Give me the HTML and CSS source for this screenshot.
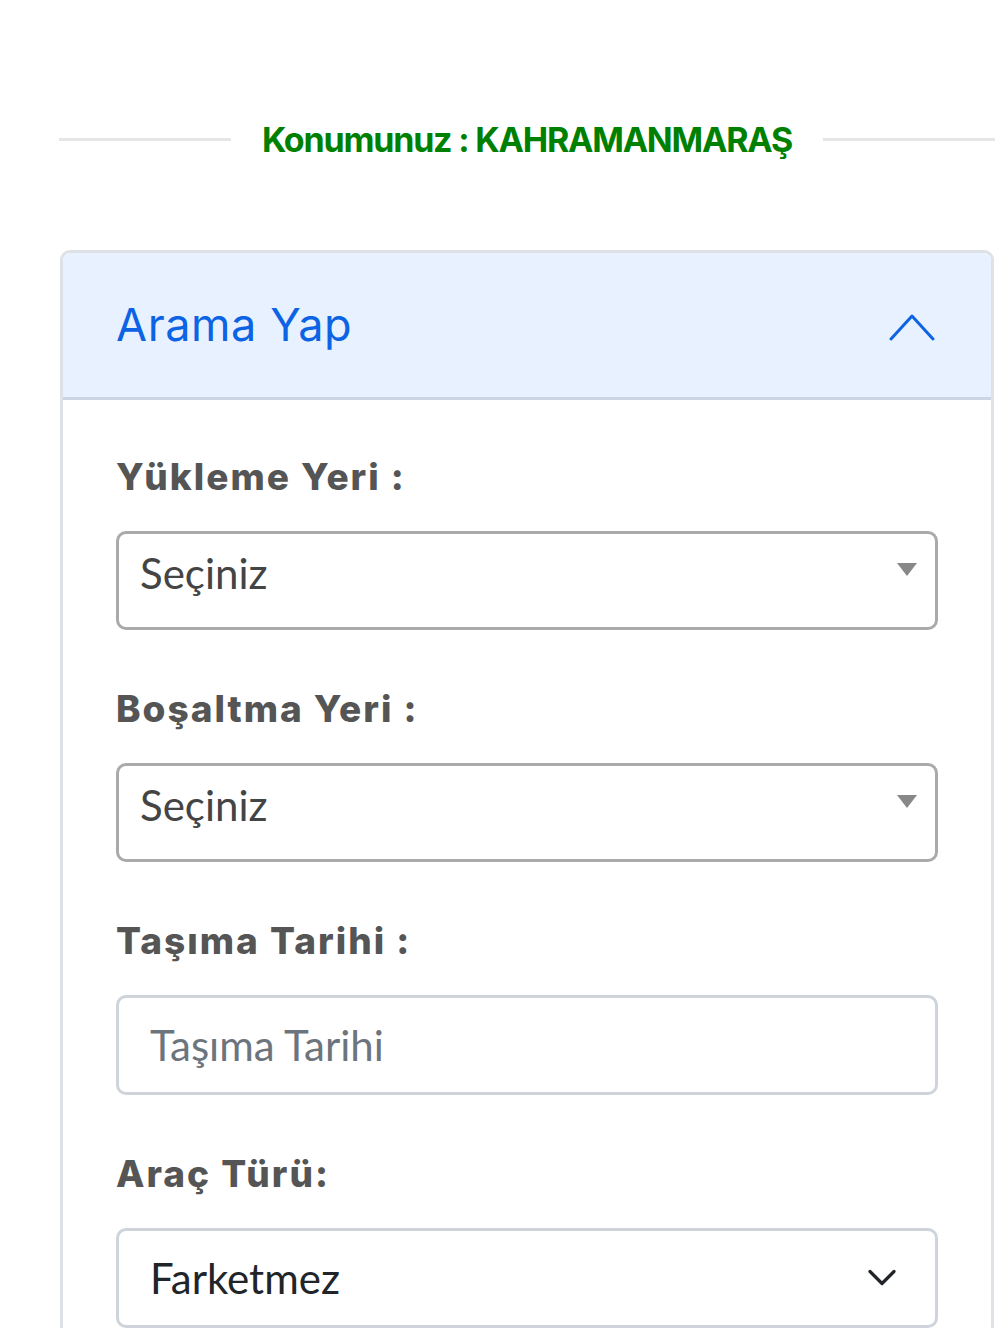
FILE: index.html
```html
<!DOCTYPE html>
<html lang="tr">

<head>
    <meta charset="UTF-8">
    <meta name="viewport" content="width=device-width, initial-scale=1.0">
    <title>Yük Ara</title>
    <link rel="stylesheet" href="styles.css">
</head>

<body>
    <div class="page">
        <div class="location">
            <span class="line"></span>
            <h4>Konumunuz : KAHRAMANMARAŞ</h4>
            <span class="line"></span>
        </div>

        <div class="accordion">
            <div class="accordion-header">
                <span>Arama Yap</span>
                <svg class="chevron-up" width="46" height="28" viewBox="0 0 46 28">
                    <path d="M2 26 L23 3 L44 26" fill="none" stroke="#0c63e4" stroke-width="3" stroke-linecap="round" stroke-linejoin="round" />
                </svg>
            </div>

            <div class="accordion-body">
                <div class="field">
                    <label>Yükleme Yeri :</label>
                    <div class="select2">
                        <span class="select2-text">Seçiniz</span>
                        <span class="select2-arrow"></span>
                    </div>
                </div>

                <div class="field">
                    <label>Boşaltma Yeri :</label>
                    <div class="select2">
                        <span class="select2-text">Seçiniz</span>
                        <span class="select2-arrow"></span>
                    </div>
                </div>

                <div class="field">
                    <label for="tarih">Taşıma Tarihi :</label>
                    <input type="text" id="tarih" class="form-control" placeholder="Taşıma Tarihi">
                </div>

                <div class="field">
                    <label for="arac">Araç Türü:</label>
                    <div class="form-select">
                        <span>Farketmez</span>
                        <svg width="30" height="18" viewBox="0 0 30 18">
                            <path d="M3 2.5 L15 14.5 L27 2.5" fill="none" stroke="#212529" stroke-width="3.2" stroke-linecap="round" stroke-linejoin="round" />
                        </svg>
                    </div>
                </div>
            </div>
        </div>
    </div>
</body>

</html>
```

FILE: styles.css
```css
body {
    margin: 0;
    background-color: #ffffff;
    font-family: Lato, "Liberation Sans", sans-serif;
    overflow: hidden;
}

.page {
    width: 936px;
    margin-left: 59px;
    padding-top: 112px;
}

.location {
    display: flex;
    align-items: center;
    gap: 31px;
}

.location .line {
    flex: 1;
    height: 3px;
    background-color: #e6e6e6;
}

.location h4 {
    margin: 0;
    font-family: Inter, sans-serif;
    font-weight: 700;
    font-size: 34px;
    line-height: 55px;
    letter-spacing: -1.2px;
    color: #008000;
}

.accordion {
    box-sizing: border-box;
    margin-top: 83px;
    margin-left: 1px;
    width: 934px;
    border: 3px solid #dee2e6;
    border-bottom: none;
    border-radius: 10px 10px 0 0;
}

.accordion-header {
    height: 147px;
    display: flex;
    align-items: center;
    justify-content: space-between;
    padding: 0 56px 0 53px;
    background-color: #e7f1ff;
    border-radius: 8px 8px 0 0;
    box-shadow: inset 0 -3px 0 #ccd6e3;
    color: #0c63e4;
    font-family: Inter, sans-serif;
    font-size: 45px;
    font-weight: 400;
    letter-spacing: 0.6px;
}

.accordion-header span {
    margin-top: -4px;
}

.accordion-body {
    padding: 50px 53px 0 53px;
}

.field {
    margin-bottom: 52px;
}

.field label {
    display: block;
    font-family: Inter, sans-serif;
    font-weight: 800;
    font-size: 37px;
    line-height: 54px;
    letter-spacing: 2px;
    color: #555555;
    margin-bottom: 27px;
}

.select2 {
    position: relative;
    box-sizing: border-box;
    height: 99px;
    border: 3px solid #aaaaaa;
    border-radius: 10px;
    padding: 10px 21px;
}

.select2-text {
    font-size: 42px;
    line-height: 58px;
    color: #444444;
}

.select2-arrow {
    position: absolute;
    top: 29px;
    right: 18px;
    width: 0;
    height: 0;
    border-left: 10px solid transparent;
    border-right: 10px solid transparent;
    border-top: 13px solid #888888;
}

.form-control,
.form-select {
    display: flex;
    align-items: center;
    justify-content: space-between;
    box-sizing: border-box;
    width: 100%;
    height: 100px;
    border: 3px solid #ced4da;
    border-radius: 10px;
    padding: 0 38px 0 31px;
    font-family: Lato, sans-serif;
    font-size: 42px;
    color: #212529;
    background-color: #ffffff;
}

.form-control::placeholder {
    color: #6c757d;
}
```
